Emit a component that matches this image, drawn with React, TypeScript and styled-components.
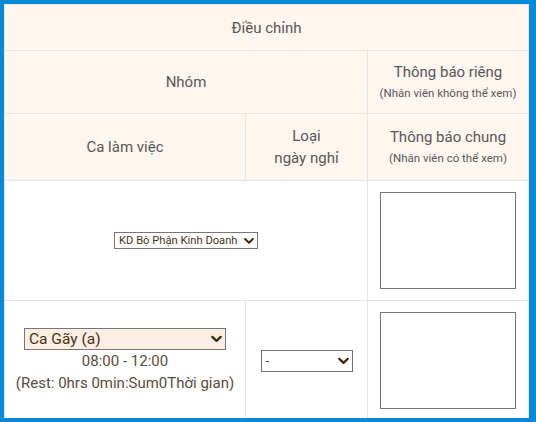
import React from "react"
import styled, { createGlobalStyle } from "styled-components"

const GlobalStyle = createGlobalStyle`
  html, body {
    margin: 0;
    padding: 0;
    background: #0a88d8;
  }
  body {
    font-family: Roboto, "Noto Sans", sans-serif;
  }
`

const Frame = styled.div`
  margin: 4px 0 0 4px;
  width: 525px;
  height: 414px;
  overflow: hidden;
  background: #fff;
`

const Grid = styled.div`
  display: grid;
  grid-template-columns: 240px 121px 160px;
  grid-template-rows: 45px 62px 66px 119px 119px;
  gap: 1px;
  padding: 1px;
  background: #e6e6e6;
`

const Cell = styled.div<{ $head?: boolean; $span?: number }>`
  grid-column: span ${(p) => p.$span ?? 1};
  background: ${(p) => (p.$head ? "#fef6ef" : "#fff")};
  display: flex;
  flex-direction: column;
  align-items: center;
  justify-content: center;
  text-align: center;
  color: #58565a;
  font-size: 15px;
  line-height: 22px;
`

const Note = styled.span`
  font-size: 11.5px;
  line-height: 20px;
`

const Info = styled.div`
  color: #5b4c40;
  font-size: 15px;
  line-height: 22px;
`

const SelectBox = styled.div`
  position: relative;
  display: inline-flex;
`

const Select = styled.select<{ $w: number; $h: number; $size: number; $bg?: string }>`
  appearance: none;
  box-sizing: border-box;
  width: ${(p) => p.$w}px;
  height: ${(p) => p.$h}px;
  font-family: Roboto, "Noto Sans", sans-serif;
  font-size: ${(p) => p.$size}px;
  color: #4a3418;
  background: ${(p) => p.$bg ?? "#fff"};
  border: 1px solid #767676;
  border-radius: 0;
  padding: 0 12px 0 4px;
  margin: 0;
  outline: none;
`

const Chevron = styled.svg`
  position: absolute;
  right: 4px;
  top: 50%;
  transform: translateY(-50%);
  pointer-events: none;
`

const Memo = styled.textarea`
  width: 136px;
  height: 97px;
  box-sizing: border-box;
  border: 1px solid #767676;
  border-radius: 0;
  resize: none;
  margin: 0;
  padding: 2px;
`

type dropProps = {
  w: number
  h: number
  size: number
  bg?: string
  label: string
}

const Dropdown = ({ w, h, size, bg, label }: dropProps) => {
  const cw = size > 12 ? 11 : 10
  return (
    <SelectBox>
      <Select $w={w} $h={h} $size={size} $bg={bg} defaultValue={label}>
        <option value={label}>{label}</option>
      </Select>
      <Chevron width={cw} height={7} viewBox="0 0 11 7">
        <path
          d="M1.3 1.3 L5.5 5.3 L9.7 1.3"
          fill="none"
          stroke="#3f2a10"
          strokeWidth="2.3"
          strokeLinecap="round"
          strokeLinejoin="round"
        />
      </Chevron>
    </SelectBox>
  )
}

const App = () => {
  return (
    <>
      <GlobalStyle />
      <Frame>
        <Grid>
          <Cell $head $span={3}>Điều chỉnh</Cell>

          <Cell $head $span={2}>Nhóm</Cell>
          <Cell $head>
            Thông báo riêng
            <Note>(Nhân viên không thể xem)</Note>
          </Cell>

          <Cell $head>Ca làm việc</Cell>
          <Cell $head>
            Loại
            <br />
            ngày nghỉ
          </Cell>
          <Cell $head>
            Thông báo chung
            <Note>(Nhân viên có thể xem)</Note>
          </Cell>

          <Cell $span={2}>
            <Dropdown w={144} h={17} size={11.2} label="KD Bộ Phận Kinh Doanh" />
          </Cell>
          <Cell>
            <Memo />
          </Cell>

          <Cell>
            <Dropdown w={202} h={22} size={15.5} bg="#fdeee3" label="Ca Gãy (a)" />
            <Info>08:00 - 12:00</Info>
            <Info>(Rest: 0hrs 0min:Sum0Thời gian)</Info>
          </Cell>
          <Cell>
            <Dropdown w={92} h={22} size={13} label="-" />
          </Cell>
          <Cell>
            <Memo />
          </Cell>
        </Grid>
      </Frame>
    </>
  )
}

export default App
